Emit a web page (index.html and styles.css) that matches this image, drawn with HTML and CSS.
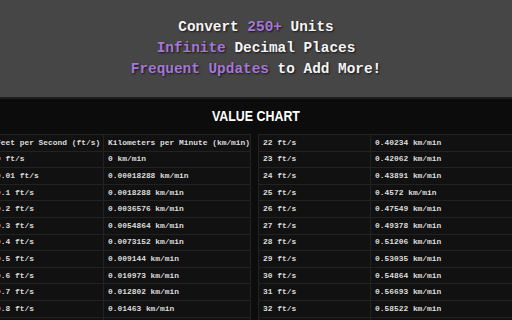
FILE: index.html
```html
<!DOCTYPE html>
<html lang="en">
<head>
<meta charset="utf-8">
<title>Feet per Second to Kilometers per Minute</title>
<link rel="stylesheet" href="styles.css">
</head>
<body>
<header class="promo">
  <p class="promo-line">Convert <span class="accent">250+</span> Units</p>
  <p class="promo-line"><span class="accent">Infinite</span> Decimal Places</p>
  <p class="promo-line"><span class="accent">Frequent Updates</span> to Add More!</p>
</header>
<main class="chart">
  <h2 class="chart-title"><span class="chart-title-text">VALUE CHART</span></h2>
  <div class="tables">
    <table class="value-table">
      <tr><th>Feet per Second (ft/s)</th><th>Kilometers per Minute (km/min)</th></tr>
      <tr><td>0 ft/s</td><td>0 km/min</td></tr>
      <tr><td>0.01 ft/s</td><td>0.00018288 km/min</td></tr>
      <tr><td>0.1 ft/s</td><td>0.0018288 km/min</td></tr>
      <tr><td>0.2 ft/s</td><td>0.0036576 km/min</td></tr>
      <tr><td>0.3 ft/s</td><td>0.0054864 km/min</td></tr>
      <tr><td>0.4 ft/s</td><td>0.0073152 km/min</td></tr>
      <tr><td>0.5 ft/s</td><td>0.009144 km/min</td></tr>
      <tr><td>0.6 ft/s</td><td>0.010973 km/min</td></tr>
      <tr><td>0.7 ft/s</td><td>0.012802 km/min</td></tr>
      <tr><td>0.8 ft/s</td><td>0.01463 km/min</td></tr>
      <tr><td>0.9 ft/s</td><td>0.016459 km/min</td></tr>
    </table>
    <table class="value-table">
      <tr><td>22 ft/s</td><td>0.40234 km/min</td></tr>
      <tr><td>23 ft/s</td><td>0.42062 km/min</td></tr>
      <tr><td>24 ft/s</td><td>0.43891 km/min</td></tr>
      <tr><td>25 ft/s</td><td>0.4572 km/min</td></tr>
      <tr><td>26 ft/s</td><td>0.47549 km/min</td></tr>
      <tr><td>27 ft/s</td><td>0.49378 km/min</td></tr>
      <tr><td>28 ft/s</td><td>0.51206 km/min</td></tr>
      <tr><td>29 ft/s</td><td>0.53035 km/min</td></tr>
      <tr><td>30 ft/s</td><td>0.54864 km/min</td></tr>
      <tr><td>31 ft/s</td><td>0.56693 km/min</td></tr>
      <tr><td>32 ft/s</td><td>0.58522 km/min</td></tr>
      <tr><td>33 ft/s</td><td>0.6035 km/min</td></tr>
    </table>
  </div>
</main>
</body>
</html>
```
FILE: styles.css
```css
html, body {
  margin: 0;
  padding: 0;
  overflow: hidden;
  background: #0c0c0c;
}

.promo {
  background: #464646;
  padding: 17px 0 17px;
  border-bottom: 2px solid #1e1e1e;
  text-align: center;
  font-family: "Liberation Mono", "Courier New", monospace;
  font-weight: bold;
  font-size: 14.4px;
  line-height: 21px;
  color: #f4f4f4;
  text-shadow: 1px 1px 2px rgba(0, 0, 0, 0.7);
}

.promo-line {
  margin: 0;
}

.accent {
  color: #a676d9;
}

.chart {
  padding-top: 8px;
}

.chart-title {
  margin: 0 0 9px;
  text-align: center;
  font-family: "Liberation Sans", Arial, sans-serif;
  font-weight: bold;
  font-size: 15.5px;
  line-height: 18px;
  color: #ffffff;
}

.chart-title-text {
  display: inline-block;
  transform: scaleX(0.8);
}

.tables {
  display: flex;
  justify-content: center;
  align-items: flex-start;
  gap: 7px;
  padding-right: 3px;
}

.value-table {
  flex: none;
  width: 260px;
  border-collapse: separate;
  border-spacing: 0;
  border-top: 1px solid #222;
  border-left: 1px solid #222;
  font-family: "Liberation Mono", "Courier New", monospace;
  font-weight: bold;
  font-size: 7.9px;
  color: #dcdcdc;
  table-layout: fixed;
}

.value-table th,
.value-table td {
  height: 15.6px;
  padding: 0 4px;
  background: #111111;
  border-right: 1px solid #222;
  border-bottom: 1px solid #222;
  text-align: left;
  white-space: nowrap;
  font-weight: bold;
  line-height: 10px;
}

.value-table th:first-child,
.value-table td:first-child {
  width: 103px;
}
```
